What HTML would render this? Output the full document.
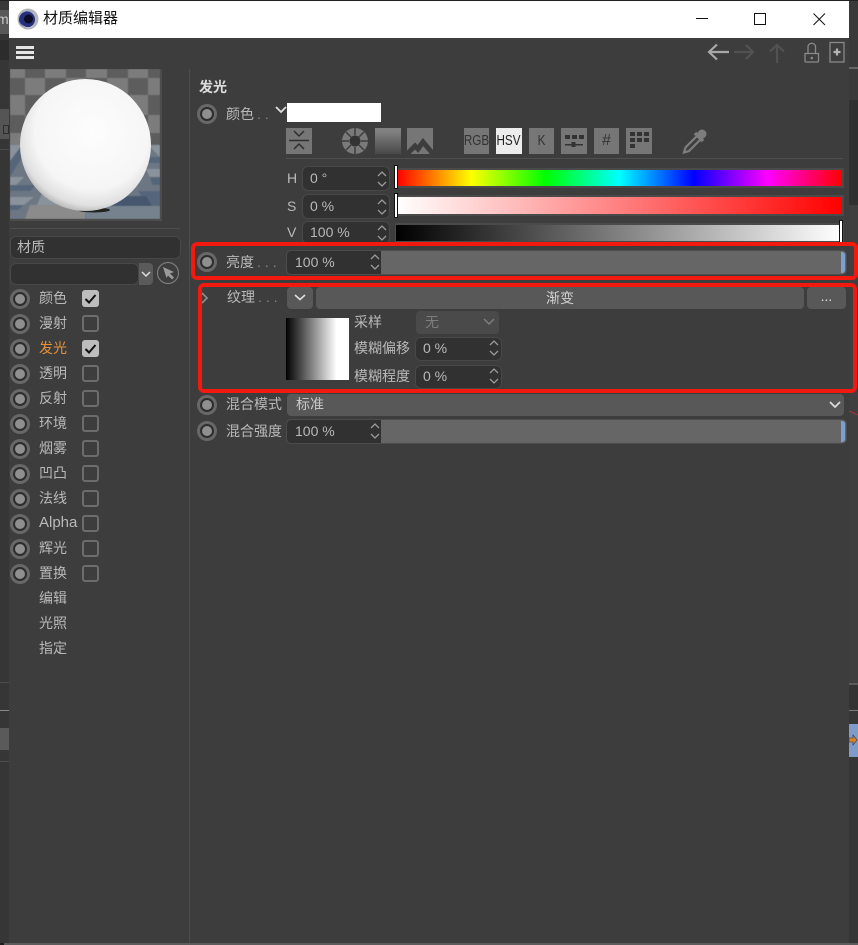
<!DOCTYPE html>
<html><head><meta charset="utf-8">
<style>
html,body{margin:0;padding:0;background:#333}
#p{position:relative;width:858px;height:945px;overflow:hidden;background:#363636;font-family:"Liberation Sans","Noto Sans CJK SC",sans-serif;font-size:14px;color:#b9b9b9}
#p div,#p svg{position:absolute}
.t{position:absolute;white-space:nowrap;line-height:20px;height:20px}
.d{letter-spacing:4px;margin-left:3px;color:#888}
.r{width:20px;height:20px;border-radius:50%;background:#686868}
.r:after{content:"";position:absolute;left:3px;top:3px;width:10px;height:10px;border:2px solid #2d2d2d;border-radius:50%;background:#8f8f8f}
.c{left:82px;width:13px;height:13px;border:2px solid #6c6c6c;border-radius:3px}
.k{left:82px;width:17px;height:17px;border-radius:3px;background:#bdbdbd}
.f{background:#313131;border-radius:5px;box-shadow:0 0 0 1px #484848}
.ib{background:#767676;width:26px;height:26px;top:128px}
.lb{top:131px;width:45px;text-align:center;font-size:15px;color:#333;transform:scaleX(.78)}
</style></head><body><div id="p">
<!-- background strips -->
<div style="left:0;top:0;width:858px;height:1px;background:#222"></div>
<div style="left:0;top:1px;width:9px;height:9px;background:#383838"></div>
<div style="left:0;top:10px;width:9px;height:24px;background:#585858"></div>
<div class="t" style="left:-3px;top:9px;color:#c8c8c8">m</div>
<div style="left:0;top:40px;width:9px;height:20px;background:#2c2c2c"></div>
<div style="left:0;top:109px;width:9px;height:30px;background:#555"></div>
<div style="left:3px;top:125px;width:4px;height:7px;border:1px solid #2e2e2e"></div>
<div style="left:0;top:149px;width:9px;height:1px;background:#4a4a4a"></div>
<div style="left:0;top:682px;width:9px;height:1px;background:#4d4d4d"></div>
<div style="left:0;top:710px;width:9px;height:1px;background:#8a8a8a"></div>
<div style="left:0;top:728px;width:9px;height:22px;background:#5a5a5a"></div>
<div style="left:0;top:761px;width:9px;height:1px;background:#4d4d4d"></div>
<div style="left:849px;top:1px;width:9px;height:100px;background:#3a3a3a"></div>
<div style="left:849px;top:67px;width:9px;height:2px;background:#666"></div>
<div style="left:849px;top:100px;width:9px;height:105px;background:#303030"></div>
<div style="left:849px;top:205px;width:9px;height:480px;background:#3f3f3f"></div>
<div style="left:849px;top:683px;width:9px;height:2px;background:#5a5a5a"></div>
<div style="left:849px;top:685px;width:9px;height:24px;background:#333"></div>
<div style="left:849px;top:710px;width:9px;height:1px;background:#7a7a7a"></div>
<div style="left:849px;top:724px;width:9px;height:33px;background:#7f9cc8"></div>
<svg style="left:849px;top:732px" width="9" height="16"><path d="M0 6h4V3l4 5-4 5v-3H0z" fill="#d9812c" stroke="#333" stroke-width=".6"/></svg>
<div style="left:4px;top:943px;width:854px;height:2px;background:#5c5c5c"></div>
<div style="left:0;top:943px;width:4px;height:2px;background:#1e1e1e"></div>

<!-- window -->
<div style="left:9px;top:38px;width:840px;height:905px;background:#3d3d3d"></div>
<div style="left:9px;top:1px;width:840px;height:37px;background:#fff"></div>

<!-- title bar -->
<svg style="left:17px;top:8px" width="22" height="22" viewBox="0 0 22 22">
<circle cx="11" cy="11" r="10.500" fill="#b4b6be"/><circle cx="10" cy="11.500" r="8" fill="#27307e"/><path d="M6 5a7 7 0 0 1 10 1 6 6 0 0 0-10-1z" fill="#7f8ac0"/><circle cx="11.500" cy="11" r="4.500" fill="#0a0d24"/><path d="M3 14a8.500 8.500 0 0 0 15 2 9 9 0 0 1-15-2z" fill="#dcdde3"/></svg>
<div class="t" style="left:43px;top:9px;font-size:15px;color:#111">材质编辑器</div>
<svg style="left:690px;top:8px" width="140" height="22" fill="none" stroke="#111" stroke-width="1">
<path d="M6 10.500H18"/><rect x="64.500" y="5.500" width="11" height="11"/><path d="M123.500 5.500L135 17M135 5.500L123.500 17"/></svg>

<!-- toolbar -->
<div style="left:16px;top:46px;width:18px;height:3px;background:#e4e4e4"></div>
<div style="left:16px;top:51px;width:18px;height:3px;background:#e4e4e4"></div>
<div style="left:16px;top:56px;width:18px;height:3px;background:#e4e4e4"></div>
<svg style="left:705px;top:40px" width="140" height="24" fill="none" stroke-width="2.200">
<path d="M4 12H24M12 4.500L4 12l8 7.500" stroke="#a8a8a8"/>
<path d="M29 12H48M41 5l7 7-7 7" stroke="#525252"/>
<path d="M72 23V5M65 11.500L72 5l7 6.500" stroke="#525252"/>
<path d="M100 13.500h13.500v7.500a1 1 0 0 1-1 1H101a1 1 0 0 1-1-1zM103 13.500V7a3.700 3.700 0 0 1 7.500 0v6.500" stroke="#8a8a8a" stroke-width="1.300"/>
<circle cx="106.800" cy="18" r="1.300" fill="#8a8a8a" stroke="none"/>
<rect x="125" y="2.500" width="14" height="19.500" stroke="#8a8a8a" stroke-width="1.300"/>
<path d="M132 8.500v7M128.500 12h7" stroke="#b5b5b5" stroke-width="2.200"/>
</svg>

<!-- preview -->
<svg style="left:10px;top:69px" width="152" height="152" viewBox="0 0 152 152">
<defs>
<radialGradient id="sph" cx=".55" cy=".4" r=".62"><stop offset="0" stop-color="#fdfdfd"/><stop offset=".7" stop-color="#f6f6f6"/><stop offset=".9" stop-color="#e0e0e0"/><stop offset="1" stop-color="#b4b4b4"/></radialGradient>
<filter id="bl" x="-5%" y="-5%" width="110%" height="110%"><feGaussianBlur stdDeviation=".6"/></filter>
</defs>
<rect width="152" height="152" fill="#4c4c4c"/>
<g filter="url(#bl)">
<rect width="150" height="80" fill="#5d5d5d"/>
<g fill="#7c7c7c">
<rect x="0" y="0" width="15" height="9"/><rect x="35" y="0" width="21" height="9"/><rect x="76" y="0" width="21" height="9"/><rect x="118" y="0" width="20" height="9"/>
<rect x="15" y="9" width="20" height="17"/><rect x="56" y="9" width="20" height="17"/><rect x="97" y="9" width="21" height="17"/><rect x="138" y="9" width="12" height="17"/>
<rect x="0" y="26" width="15" height="20"/><rect x="118" y="26" width="20" height="20"/>
<rect x="15" y="46" width="20" height="18"/><rect x="138" y="46" width="12" height="18"/>
<rect x="0" y="64" width="15" height="14"/><rect x="118" y="64" width="20" height="12"/>
</g>
<rect y="76" width="150" height="74" fill="#6c7783"/>
<g fill="#8a929b">
<path d="M0 76h12L0 92zM0 108h14l-8 8H0zM138 76h12v12zM136 100h14v8h-10z"/>
<path d="M0 128h24l-10 8H0zM34 120h40v30H15l12-14z"/>
<path d="M20 136h55v14H15z" fill="#8b8b8b"/>
</g>
<g fill="#57667a">
<path d="M0 92l12-16 8 0L0 108zM6 116h20l-6 6H0v-6zM130 88h20v6h-16zM140 108h10v8h-8zM128 122h22v6h-18z"/>
<path d="M0 136h14l-6 5H0z"/>
<path d="M76 127h74v10H76z"/>
</g>
<path d="M76 137h74v13H76z" fill="#76838f"/>
<path d="M92 127h44l6 10H92z" fill="#44566e"/>
</g>
<rect x="0" y="150" width="152" height="2" fill="#4c4c4c"/><rect x="150" width="2" height="152" fill="#4c4c4c"/>
<ellipse cx="84" cy="141" rx="16" ry="2.500" fill="#222"/>
<ellipse cx="75.500" cy="76" rx="65.500" ry="66" fill="url(#sph)"/>
</svg>

<div style="left:10px;top:228px;width:170px;height:1px;background:#4d4d4d"></div>
<div style="left:189px;top:69px;width:1px;height:874px;background:#4e4e4e"></div>

<!-- name -->
<div class="f" style="left:11px;top:237px;width:169px;height:21px"></div>
<div class="t" style="left:17px;top:237px">材质</div>
<div class="f" style="left:11px;top:264px;width:127px;height:20px"></div>
<div style="left:139px;top:263px;width:14px;height:22px;background:#5a5a5a;border-radius:0 4px 4px 0"></div>
<svg style="left:139px;top:268px" width="14" height="12" fill="none" stroke="#ddd" stroke-width="1.500"><path d="M3 4l4 4 4-4"/></svg>
<svg style="left:156px;top:261px" width="24" height="24"><circle cx="12" cy="12" r="10.500" fill="none" stroke="#7b7b7b" stroke-width="1.200"/><path d="M7 6l11 5-4 1.500 4 4-2 2-4-4L10.500 17z" fill="#9a9a9a"/></svg>

<!-- sidebar -->
<div class="r" style="left:10px;top:289px"></div><div class="t" style="left:39px;top:288px">颜色</div><div class="k" style="top:290px"></div>
<div class="r" style="left:10px;top:314px"></div><div class="t" style="left:39px;top:313px">漫射</div><div class="c" style="top:315px"></div>
<div class="r" style="left:10px;top:339px"></div><div class="t" style="left:39px;top:338px;color:#e8913a">发光</div><div class="k" style="top:340px"></div>
<div class="r" style="left:10px;top:364px"></div><div class="t" style="left:39px;top:363px">透明</div><div class="c" style="top:365px"></div>
<div class="r" style="left:10px;top:389px"></div><div class="t" style="left:39px;top:388px">反射</div><div class="c" style="top:390px"></div>
<div class="r" style="left:10px;top:414px"></div><div class="t" style="left:39px;top:413px">环境</div><div class="c" style="top:415px"></div>
<div class="r" style="left:10px;top:439px"></div><div class="t" style="left:39px;top:438px">烟雾</div><div class="c" style="top:440px"></div>
<div class="r" style="left:10px;top:464px"></div><div class="t" style="left:39px;top:463px">凹凸</div><div class="c" style="top:465px"></div>
<div class="r" style="left:10px;top:489px"></div><div class="t" style="left:39px;top:488px">法线</div><div class="c" style="top:490px"></div>
<div class="r" style="left:10px;top:514px"></div><div class="t" style="left:39px;top:513px;font-size:15px">Alpha</div><div class="c" style="top:515px"></div>
<div class="r" style="left:10px;top:539px"></div><div class="t" style="left:39px;top:538px">辉光</div><div class="c" style="top:540px"></div>
<div class="r" style="left:10px;top:564px"></div><div class="t" style="left:39px;top:563px">置换</div><div class="c" style="top:565px"></div>
<div class="t" style="left:39px;top:588px">编辑</div>
<div class="t" style="left:39px;top:613px">光照</div>
<div class="t" style="left:39px;top:638px">指定</div>
<svg style="left:82px;top:290px" width="17" height="17" fill="none" stroke="#111" stroke-width="2"><path d="M3.500 9l3.500 3.500L13.500 5"/></svg>
<svg style="left:82px;top:340px" width="17" height="17" fill="none" stroke="#111" stroke-width="2"><path d="M3.500 9l3.500 3.500L13.500 5"/></svg>

<!-- heading -->
<div class="t" style="left:199px;top:77px;font-weight:bold;font-size:14px;color:#dcdcdc">发光</div>
<div class="r" style="left:197px;top:104px"></div>
<div class="t" style="left:226px;top:104px">颜色<span class="d">..</span></div>
<svg style="left:274px;top:105px" width="14" height="10" fill="none" stroke="#ddd" stroke-width="1.800"><path d="M2 2l5 5 5-5"/></svg>
<div style="left:287px;top:103px;width:94px;height:19px;background:#fff"></div>

<!-- icon row -->
<div class="ib" style="left:286px"></div>
<svg style="left:286px;top:128px" width="26" height="26" fill="none" stroke="#2e2e2e" stroke-width="1.500"><path d="M3 12.500H23M8 3l5 5 5-5M8 21l5-5 5 5"/></svg>
<svg style="left:342px;top:128px" width="26" height="26"><circle cx="13" cy="13" r="13" fill="#7a7a7a"/><g stroke="#3d3d3d" stroke-width="1.500"><path d="M13 0V7M13 19V26M0 13H7M19 13H26M4 4L9 9M17 17L22 22M22 4L17 9M9 17L4 22"/></g><circle cx="13" cy="13" r="5.500" fill="#333"/></svg>
<div class="ib" style="left:375px;background:linear-gradient(#808080 15%,#484848)"></div>
<div class="ib" style="left:407px"></div>
<svg style="left:407px;top:128px" width="26" height="26" fill="none" stroke="#3d3d3d" stroke-width="5"><path d="M-1 27L8 18L11 21L16 14L27 27"/></svg>
<div class="ib" style="left:464px;width:25px"></div><div class="t lb" style="left:454px">RGB</div>
<div class="ib" style="left:496px;background:#ededed"></div><div class="t lb" style="left:486px;color:#222">HSV</div>
<div class="ib" style="left:529px;width:25px"></div><div class="t lb" style="left:519px">K</div>
<div class="ib" style="left:561px"></div>
<svg style="left:561px;top:128px" width="26" height="26" fill="#333"><rect x="4" y="7" width="5" height="4"/><rect x="11" y="7" width="5" height="4"/><rect x="18" y="7" width="5" height="4"/><rect x="4" y="16" width="18" height="1.500"/><rect x="10.500" y="14" width="4" height="5"/></svg>
<div class="ib" style="left:594px;width:25px"></div><div class="t lb" style="left:584px;transform:none;font-size:16px">#</div>
<div class="ib" style="left:626px"></div>
<svg style="left:626px;top:128px" width="26" height="26" fill="#333"><rect x="4" y="4" width="5" height="4"/><rect x="11" y="4" width="5" height="4"/><rect x="18" y="4" width="5" height="4"/><rect x="4" y="10" width="5" height="4"/><rect x="11" y="10" width="5" height="4"/><rect x="18" y="10" width="5" height="4"/><rect x="4" y="16" width="5" height="4"/></svg>
<svg style="left:682px;top:128px" width="26" height="26"><circle cx="20" cy="6" r="4.500" fill="#7d7d7d"/><path d="M13 5L21 13" stroke="#7d7d7d" stroke-width="3.500"/><path d="M15 8L3.500 19.500L2 24.500L7 23L18.500 11.500" fill="none" stroke="#7d7d7d" stroke-width="2.200"/></svg>
<div style="left:286px;top:158px;width:557px;height:1px;background:#4f4f4f"></div>

<!-- HSV -->
<div class="t" style="left:287px;top:168px">H</div>
<div class="f" style="left:303px;top:167px;width:86px;height:23px"></div><div class="t" style="left:310px;top:168px">0 °</div>
<svg style="left:376px;top:170px" width="12" height="18" fill="none" stroke="#9a9a9a" stroke-width="1.300"><path d="M2 6l4-4 4 4M2 12l4 4 4-4"/></svg>
<div style="left:395px;top:168px;width:449px;height:20px;background:#4a4a4a"></div>
<div style="left:397px;top:170px;width:445px;height:16px;background:linear-gradient(90deg,#f00 0%,#ff0 16.670%,#0f0 33.330%,#0ff 50%,#00f 66.670%,#f0f 83.330%,#f00 100%)"></div>
<div style="left:395px;top:165px;width:2px;height:22px;background:#fff;border:1px solid #111;margin-left:-1px"></div>

<div class="t" style="left:287px;top:196px">S</div>
<div class="f" style="left:303px;top:195px;width:86px;height:23px"></div><div class="t" style="left:310px;top:196px">0 %</div>
<svg style="left:376px;top:198px" width="12" height="18" fill="none" stroke="#9a9a9a" stroke-width="1.300"><path d="M2 6l4-4 4 4M2 12l4 4 4-4"/></svg>
<div style="left:395px;top:195px;width:449px;height:21px;background:#4a4a4a"></div>
<div style="left:397px;top:197px;width:445px;height:17px;background:linear-gradient(90deg,#fff,#f00)"></div>
<div style="left:395px;top:193px;width:2px;height:23px;background:#fff;border:1px solid #111;margin-left:-1px"></div>

<div class="t" style="left:287px;top:222px">V</div>
<div class="f" style="left:303px;top:222px;width:86px;height:21px"></div><div class="t" style="left:310px;top:222px">100 %</div>
<svg style="left:376px;top:224px" width="12" height="18" fill="none" stroke="#9a9a9a" stroke-width="1.300"><path d="M2 6l4-4 4 4M2 12l4 4 4-4"/></svg>
<div style="left:395px;top:223px;width:449px;height:19px;background:#4a4a4a"></div>
<div style="left:396px;top:225px;width:444px;height:16px;background:linear-gradient(90deg,#000,#fff)"></div>
<div style="left:839px;top:220px;width:2px;height:23px;background:#fff;border:1px solid #111"></div>

<!-- brightness -->
<div class="r" style="left:197px;top:252px"></div>
<div class="t" style="left:226px;top:252px">亮度<span class="d">...</span></div>
<div style="left:287px;top:251px;width:559px;height:23px;background:#666;border-radius:4px;box-shadow:0 0 0 1px #4c4c4c"></div>
<div style="left:287px;top:251px;width:94px;height:23px;background:#313131;border-radius:4px 0 0 4px"></div>
<div style="left:841px;top:252px;width:4px;height:21px;background:#7f9fd0;border-radius:0 3px 3px 0"></div>
<div class="t" style="left:295px;top:252px">100 %</div>
<svg style="left:369px;top:253px" width="12" height="18" fill="none" stroke="#9a9a9a" stroke-width="1.300"><path d="M2 6l4-4 4 4M2 12l4 4 4-4"/></svg>

<!-- texture -->
<svg style="left:200px;top:291px" width="10" height="14" fill="none" stroke="#8a8a8a" stroke-width="1.800"><path d="M2 2l5 5-5 5"/></svg>
<div class="t" style="left:227px;top:287px">纹理<span class="d">...</span></div>
<div style="left:287px;top:287px;width:26px;height:22px;background:#585858;border-radius:4px"></div>
<svg style="left:293px;top:293px" width="14" height="10" fill="none" stroke="#ddd" stroke-width="1.600"><path d="M2 2l5 4.500L12 2"/></svg>
<div style="left:316px;top:287px;width:488px;height:22px;background:#585858;border-radius:4px"></div>
<div class="t" style="left:316px;top:288px;width:488px;text-align:center;color:#d0d0d0">渐变</div>
<div style="left:807px;top:287px;width:39px;height:22px;background:#585858;border-radius:4px"></div>
<div class="t" style="left:807px;top:286px;width:39px;text-align:center;color:#ddd">...</div>
<div style="left:286px;top:318px;width:63px;height:62px;background:linear-gradient(90deg,#000,#fff 80%)"></div>
<div class="t" style="left:354px;top:312px">采样</div>
<div style="left:416px;top:311px;width:83px;height:23px;background:#4a4a4a;border-radius:4px"></div>
<div class="t" style="left:425px;top:312px;color:#7d7d7d">无</div>
<svg style="left:482px;top:317px" width="14" height="10" fill="none" stroke="#7d7d7d" stroke-width="1.500"><path d="M2 2l5 5 5-5"/></svg>
<div class="t" style="left:354px;top:338px">模糊偏移</div>
<div class="f" style="left:416px;top:338px;width:85px;height:22px"></div>
<div class="t" style="left:423px;top:338px">0 %</div>
<svg style="left:488px;top:339px" width="12" height="18" fill="none" stroke="#9a9a9a" stroke-width="1.300"><path d="M2 6l4-4 4 4M2 12l4 4 4-4"/></svg>
<div class="t" style="left:354px;top:366px">模糊程度</div>
<div class="f" style="left:416px;top:366px;width:85px;height:22px"></div>
<div class="t" style="left:423px;top:366px">0 %</div>
<svg style="left:488px;top:367px" width="12" height="18" fill="none" stroke="#9a9a9a" stroke-width="1.300"><path d="M2 6l4-4 4 4M2 12l4 4 4-4"/></svg>

<!-- blend -->
<div class="r" style="left:197px;top:395px"></div>
<div class="t" style="left:226px;top:394px">混合模式</div>
<div style="left:287px;top:394px;width:557px;height:22px;background:#585858;border-radius:4px"></div>
<div class="t" style="left:296px;top:394px;color:#c8c8c8">标准</div>
<svg style="left:827px;top:400px" width="16" height="10" fill="none" stroke="#ddd" stroke-width="1.700"><path d="M3 2l5 5 5-5"/></svg>
<div class="r" style="left:197px;top:421px"></div>
<div class="t" style="left:226px;top:421px">混合强度</div>
<div style="left:287px;top:420px;width:559px;height:23px;background:#666;border-radius:4px;box-shadow:0 0 0 1px #4c4c4c"></div>
<div style="left:287px;top:420px;width:94px;height:23px;background:#313131;border-radius:4px 0 0 4px"></div>
<div style="left:841px;top:421px;width:4px;height:21px;background:#7f9fd0;border-radius:0 3px 3px 0"></div>
<div class="t" style="left:295px;top:421px">100 %</div>
<svg style="left:369px;top:422px" width="12" height="18" fill="none" stroke="#9a9a9a" stroke-width="1.300"><path d="M2 6l4-4 4 4M2 12l4 4 4-4"/></svg>

<!-- red annotation boxes -->
<div style="left:191px;top:242px;width:659px;height:30px;border:4px solid #f3190f;border-radius:6px"></div>
<div style="left:198px;top:283px;width:651px;height:102px;border:4px solid #f3190f;border-radius:6px"></div>
<svg style="left:849px;top:410px" width="9" height="8"><path d="M0 1L9 5" stroke="#a33" stroke-width="1"/></svg>
</div></body></html>
